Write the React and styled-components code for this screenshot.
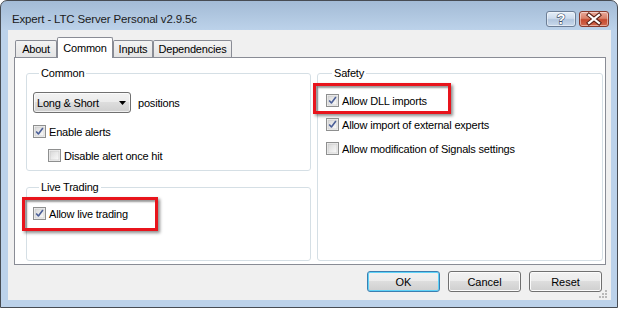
import React from "react";
import styled, { createGlobalStyle, css } from "styled-components";

const GlobalStyle = createGlobalStyle`
  html, body {
    margin: 0;
    padding: 0;
    background: #ffffff;
  }
  body {
    font-family: "Liberation Sans", Arial, sans-serif;
    font-size: 11px;
    letter-spacing: -0.2px;
    color: #000;
  }
  *, *::before, *::after {
    box-sizing: border-box;
  }
`;

const Window = styled.div`
  width: 618px;
  height: 308px;
  display: flex;
  flex-direction: column;
  border: 1px solid #474c53;
  border-radius: 7px 7px 0 0;
  background: linear-gradient(to bottom, #a3bbd6 0px, #b0c7e0 15px, #bcd2ea 29px, #bcd2ea 100%);
  overflow: hidden;
`;

const TitleBar = styled.div`
  height: 29px;
  flex: none;
  display: flex;
  align-items: flex-start;
  padding: 0 8px 0 11px;
`;

const Title = styled.div`
  flex: 1;
  margin-top: 11px;
  line-height: 14px;
  font-size: 11.5px;
  letter-spacing: -0.15px;
  color: #1b1b1b;
`;

const CaptionButtons = styled.div`
  display: flex;
  gap: 3px;
  margin-top: 10px;
`;

const CaptionButton = styled.div`
  width: 30px;
  height: 16px;
  border-radius: 3px;
  border: 1px solid ${(p) => (p.$close ? "#873a2d" : "#6c7e96")};
  background: ${(p) =>
    p.$close
      ? "linear-gradient(#e9a99a 0%, #d98069 45%, #c5492f 55%, #d2694f 100%)"
      : "linear-gradient(#e3edf7 0%, #cddcee 45%, #b2c6de 55%, #c9d9ec 100%)"};
  box-shadow: inset 0 0 0 1px rgba(255, 255, 255, 0.45);
  display: flex;
  align-items: center;
  justify-content: center;
`;

const Client = styled.div`
  flex: 1;
  margin: 0 6px 7px 7px;
  background: #f0f0f0;
  position: relative;
  display: flex;
  flex-direction: column;
  padding: 7px 5px 0 6px;
`;

const TabStrip = styled.div`
  display: flex;
  align-items: flex-end;
  height: 21px;
  margin-bottom: -1px;
  padding-left: 1px;
  flex: none;
`;

const Tab = styled.div`
  width: ${(p) => p.$w}px;
  height: ${(p) => (p.$active ? 21 : 18)}px;
  border: 1px solid #898c95;
  border-bottom: none;
  border-radius: 2px 2px 0 0;
  background: ${(p) => (p.$active ? "#ffffff" : "linear-gradient(#f3f3f3, #e3e3e3)")};
  display: flex;
  align-items: center;
  justify-content: center;
  padding-bottom: 1px;
  ${(p) =>
    p.$active &&
    css`
      position: relative;
      z-index: 2;
    `}
`;

const Panel = styled.div`
  height: 208px;
  flex: none;
  border: 1px solid #898c95;
  background: #ffffff;
  position: relative;
  z-index: 1;
  display: grid;
  grid-template-columns: 285px 286px;
  column-gap: 6px;
  padding: 9px 0 3px 11px;
`;

const Column = styled.div`
  display: flex;
  flex-direction: column;
  gap: 10px;
  min-height: 0;
`;

const Group = styled.fieldset`
  margin: 0;
  min-width: 0;
  border: 1px solid #d5dfe5;
  border-radius: 3px;
  padding: ${(p) => p.$pad};
  ${(p) => p.$grow && "flex: 1;"}
`;

const Legend = styled.legend`
  margin-left: 6px;
  padding: 0 2px;
  line-height: 13px;
  font-size: 11px;
`;

const Row = styled.div`
  display: flex;
  align-items: center;
  gap: 7px;
  height: 21px;
`;

const Select = styled.div`
  width: 98px;
  height: 21px;
  border: 1px solid #707070;
  border-radius: 3px;
  background: linear-gradient(#f2f2f2 0%, #ebebeb 50%, #dddddd 50%, #cfcfcf 100%);
  box-shadow: inset 0 0 0 1px rgba(255, 255, 255, 0.65);
  display: flex;
  align-items: center;
  justify-content: space-between;
  padding: 0 3px 0 3px;
`;

const CheckRow = styled.div`
  display: flex;
  align-items: center;
  gap: 3px;
  height: 13px;
  margin-top: ${(p) => p.$mt || 0}px;
  margin-left: ${(p) => p.$indent || 0}px;
  position: relative;
  ${(p) =>
    p.$mark &&
    css`
      &::after {
        content: "";
        position: absolute;
        left: ${p.$mark[0]}px;
        top: ${p.$mark[1]}px;
        width: ${p.$mark[2]}px;
        height: ${p.$mark[3]}px;
        border: 3px solid #e8141c;
        box-shadow: 2px 2px 3px rgba(0, 0, 0, 0.45), inset 2px 2px 2px rgba(0, 0, 0, 0.4);
        pointer-events: none;
      }
    `}
`;

const Footer = styled.div`
  display: flex;
  justify-content: flex-end;
  gap: 8px;
  padding: 6px 4px 0 0;
`;

const Button = styled.button`
  width: 73px;
  height: 21px;
  padding: 0;
  font: inherit;
  font-size: 11px;
  color: #000;
  border: 1px solid ${(p) => (p.$default ? "#3c7fb1" : "#707070")};
  border-radius: 3px;
  background: linear-gradient(#f2f2f2 0%, #ebebeb 50%, #dddddd 50%, #cfcfcf 100%);
  box-shadow: inset 0 0 0 1px ${(p) => (p.$default ? "#5fd3f8" : "#fbfbfb")};
`;

const Grip = styled.svg`
  position: absolute;
  right: 3px;
  bottom: 1px;
`;

function CheckBox({ checked }) {
  return (
    <svg width="13" height="13" viewBox="0 0 13 13">
      <defs>
        <linearGradient id="cbg" x1="0" y1="0" x2="1" y2="1">
          <stop offset="0" stopColor="#d8d8d8" />
          <stop offset="1" stopColor="#fbfbfb" />
        </linearGradient>
      </defs>
      <rect x="0.5" y="0.5" width="12" height="12" fill="#f6f6f6" stroke="#8e8f8f" />
      <rect x="2" y="2" width="9" height="9" fill="url(#cbg)" stroke="#c4c4c4" strokeWidth="0.6" />
      {checked && (
        <path d="M3.2 6.4 L5.4 9 L9.9 3" fill="none" stroke="#4b5f98" strokeWidth="1.6" strokeLinejoin="round" />
      )}
    </svg>
  );
}

function Check({ checked, label, ...rest }) {
  return (
    <CheckRow {...rest}>
      <CheckBox checked={checked} />
      <span>{label}</span>
    </CheckRow>
  );
}

export default function App() {
  return (
    <>
      <GlobalStyle />
      <Window>
        <TitleBar>
          <Title>Expert - LTC Server Personal v2.9.5c</Title>
          <CaptionButtons>
            <CaptionButton>
              <svg width="28" height="14" viewBox="0 0 28 14">
                <text
                  x="14"
                  y="12"
                  textAnchor="middle"
                  fontSize="14"
                  fontWeight="bold"
                  fontFamily="Liberation Sans, Arial, sans-serif"
                  fill="#ffffff"
                  stroke="#3d4e68"
                  strokeWidth="1.2"
                  paintOrder="stroke"
                >
                  ?
                </text>
              </svg>
            </CaptionButton>
            <CaptionButton $close>
              <svg width="28" height="14" viewBox="0 0 28 14">
                <path d="M9 3 L19 11 M19 3 L9 11" stroke="#5b2117" strokeWidth="4.2" strokeLinecap="square" />
                <path d="M9 3 L19 11 M19 3 L9 11" stroke="#ffffff" strokeWidth="2.2" strokeLinecap="square" />
              </svg>
            </CaptionButton>
          </CaptionButtons>
        </TitleBar>
        <Client>
          <TabStrip>
            <Tab $w={42}>About</Tab>
            <Tab $w={56} $active>Common</Tab>
            <Tab $w={40}>Inputs</Tab>
            <Tab $w={79}>Dependencies</Tab>
          </TabStrip>
          <Panel>
            <Column>
              <Group $pad="12px 6px 8px 6px">
                <Legend>Common</Legend>
                <Row>
                  <Select>
                    <span>Long &amp; Short</span>
                    <svg width="8" height="4" viewBox="0 0 8 4">
                      <path d="M0 0 H7 L3.5 4 Z" fill="#000" />
                    </svg>
                  </Select>
                  <span>positions</span>
                </Row>
                <Check checked label="Enable alerts" $mt={12} />
                <Check label="Disable alert once hit" $mt={11} $indent={15} />
              </Group>
              <Group $grow $pad="13px 6px 0 6px">
                <Legend>Live Trading</Legend>
                <Check checked label="Allow live trading" $mark={[-11, -10, 136, 34]} />
              </Group>
            </Column>
            <Column>
              <Group $grow $pad="14px 8px 0 8px">
                <Legend>Safety</Legend>
                <Check checked label="Allow DLL imports" $mark={[-13, -11, 138, 31]} />
                <Check checked label="Allow import of external experts" $mt={11} />
                <Check label="Allow modification of Signals settings" $mt={11} />
              </Group>
            </Column>
          </Panel>
          <Footer>
            <Button $default>OK</Button>
            <Button>Cancel</Button>
            <Button>Reset</Button>
          </Footer>
          <Grip width="9" height="9" viewBox="0 0 9 9">
            <g fill="#b8b8b8">
              <rect x="6" y="0" width="2" height="2" />
              <rect x="3" y="3" width="2" height="2" />
              <rect x="6" y="3" width="2" height="2" />
              <rect x="0" y="6" width="2" height="2" />
              <rect x="3" y="6" width="2" height="2" />
              <rect x="6" y="6" width="2" height="2" />
            </g>
          </Grip>
        </Client>
      </Window>
    </>
  );
}
